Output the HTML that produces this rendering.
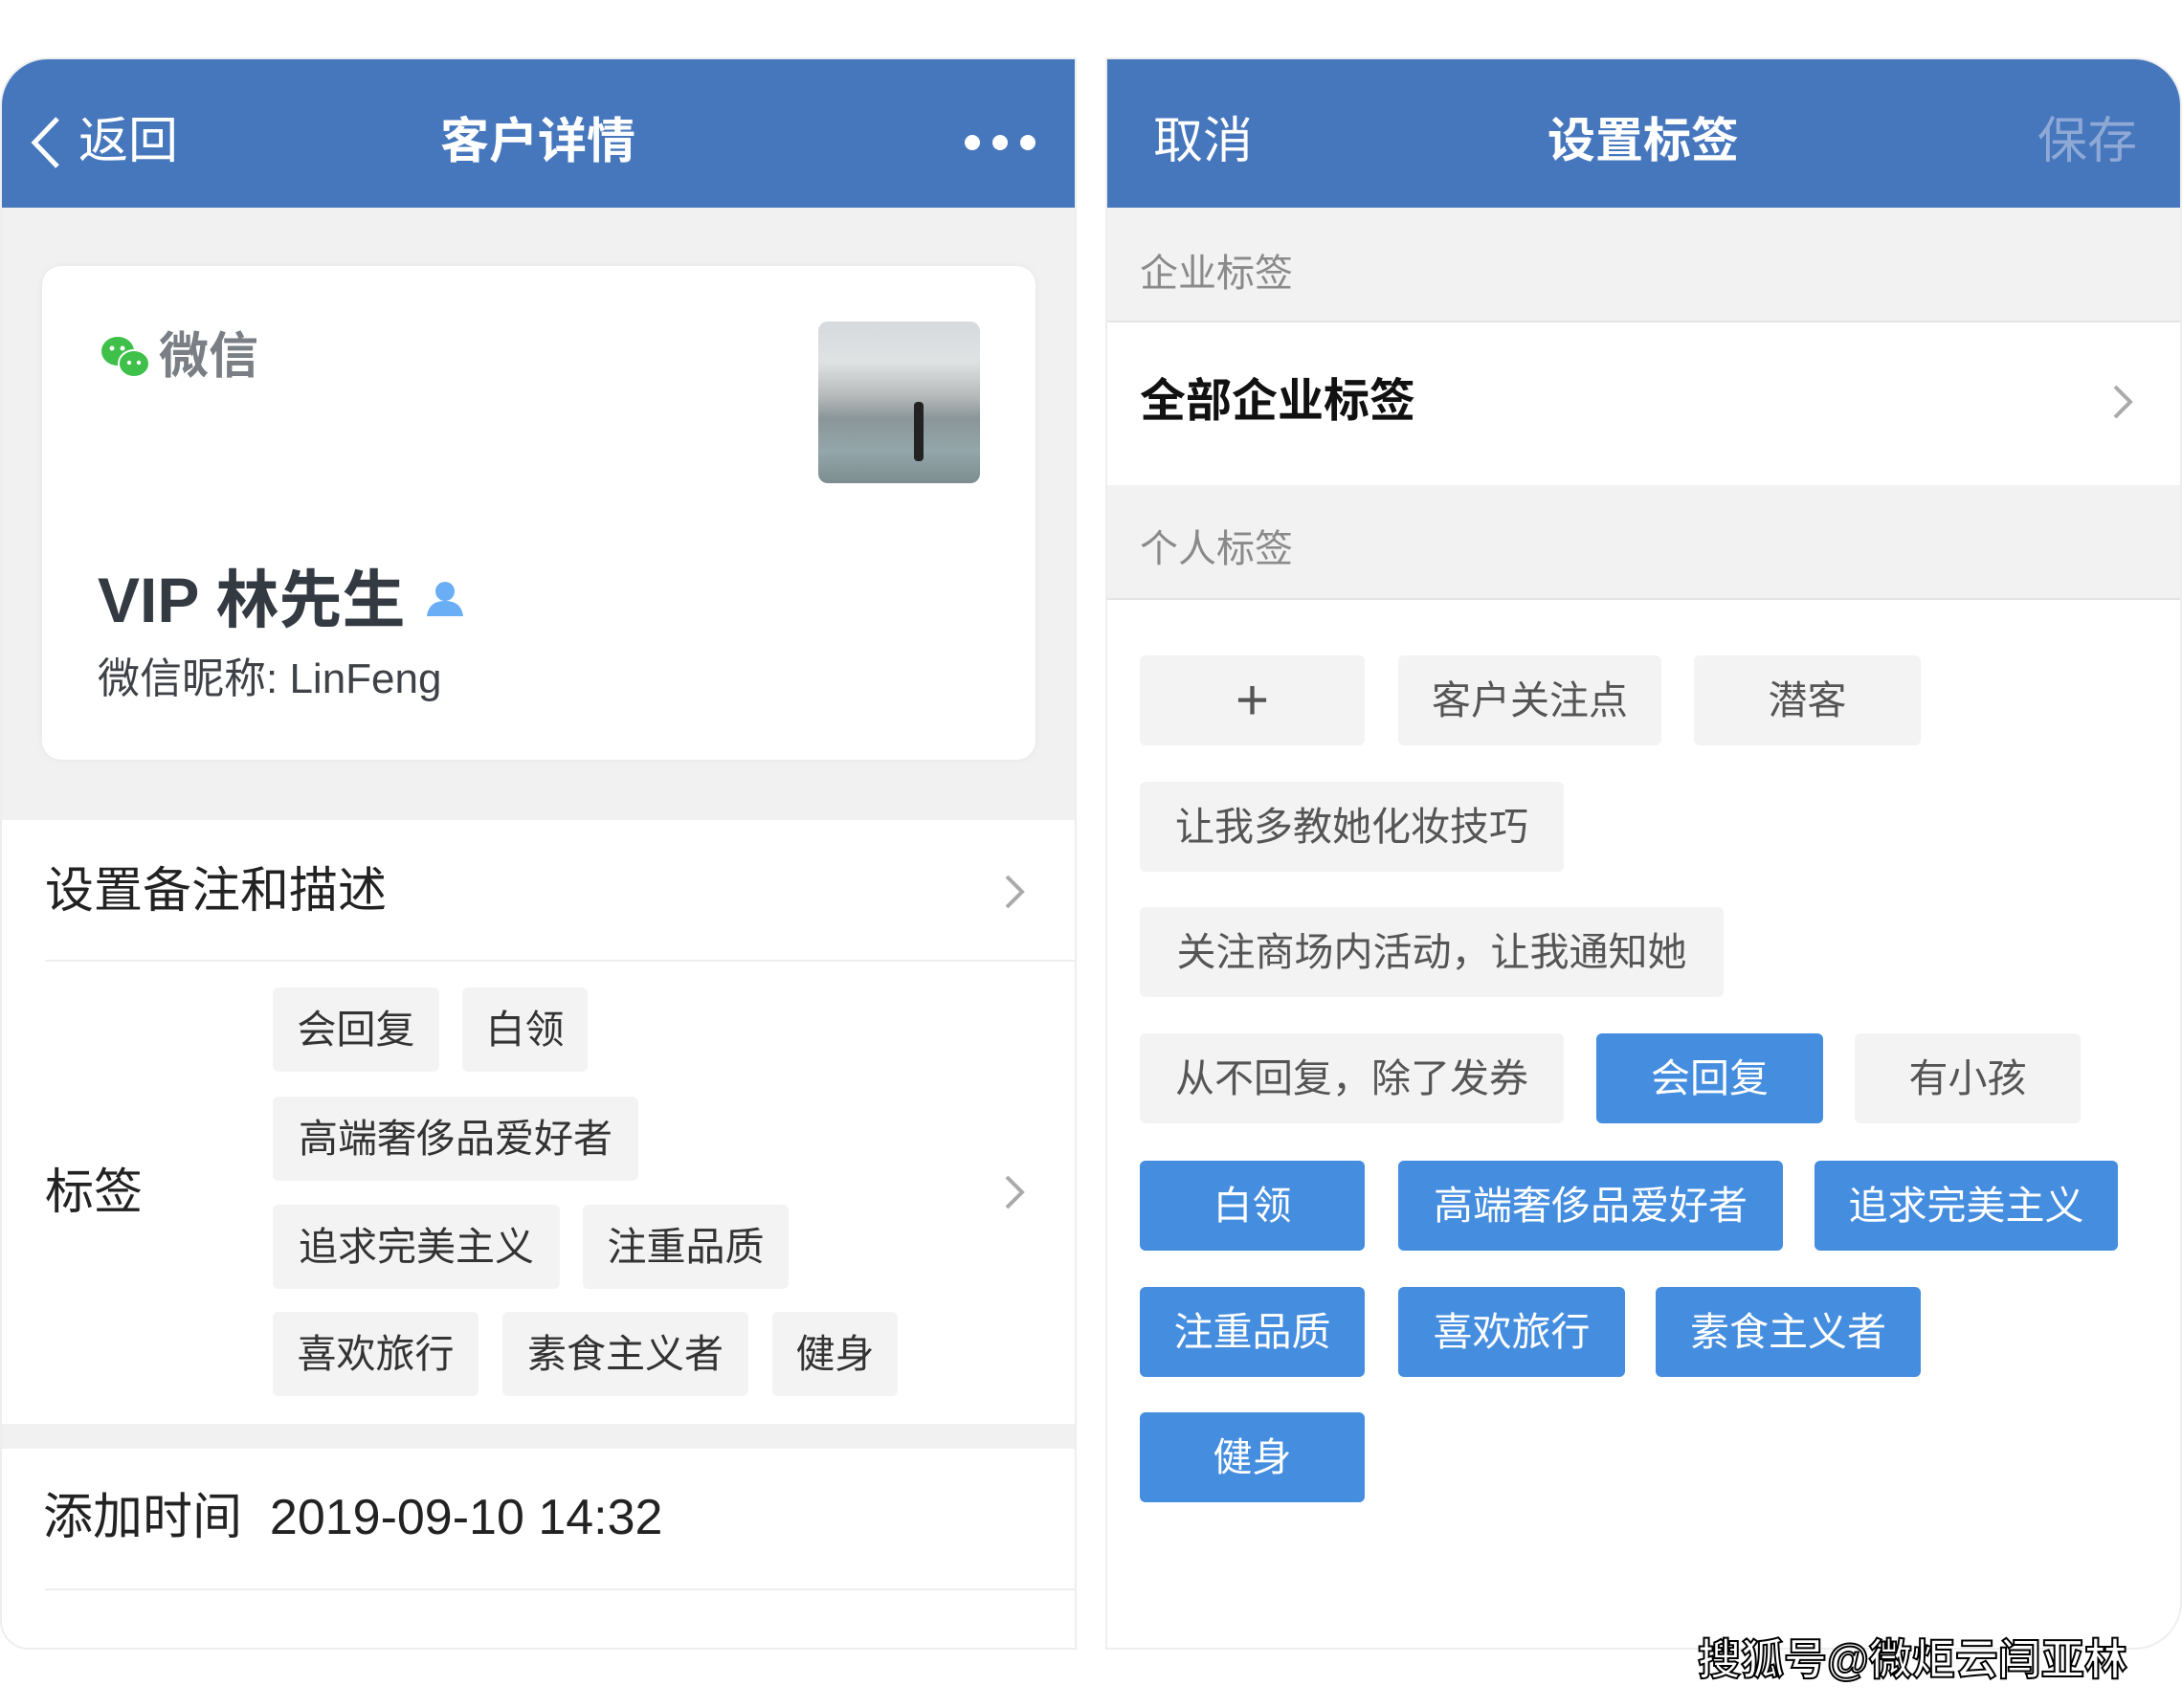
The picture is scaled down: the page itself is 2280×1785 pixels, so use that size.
<!DOCTYPE html>
<html><head><meta charset="utf-8"><style>
*{margin:0;padding:0;box-sizing:border-box}
body{width:2280px;height:1785px;background:#fff;position:relative;overflow:hidden;font-family:"Liberation Sans","Noto Sans CJK SC",sans-serif}
.a{position:absolute}
.t{white-space:nowrap;line-height:1}
.chip{position:absolute;background:#f3f3f3;color:#333;font-size:41px;display:flex;align-items:center;justify-content:center;border-radius:6px;line-height:1}
.b{background:#448ddf;color:#fff!important}
</style></head><body>
<!-- left panel -->
<div class="a" style="left:0;top:60px;width:1125px;height:1664px;background:#fff;border-radius:50px 0 0 30px;border:2px solid #eee;overflow:hidden">
 <div class="a" style="left:0;top:0;width:1125px;height:155px;background:#4677bd"></div>
 <div class="a" style="left:0;top:155px;width:1125px;height:640px;background:#f1f1f1"></div>
 <div class="a" style="left:0;top:1426px;width:1125px;height:26px;background:#f1f1f1"></div>
</div>
<svg class="a" style="left:30px;top:120px" width="36" height="58"><path d="M30 4 L6 29 L30 54" fill="none" stroke="#fff" stroke-width="5"/></svg>
<div class="a t" style="left:82px;top:122px;font-size:52px;color:#fff">返回</div>
<div class="a t" style="left:460px;top:122px;font-size:51px;color:#fff;font-weight:bold">客户详情</div>
<div class="a" style="left:1008px;top:141px;width:16px;height:16px;border-radius:50%;background:#fff"></div>
<div class="a" style="left:1037px;top:141px;width:16px;height:16px;border-radius:50%;background:#fff"></div>
<div class="a" style="left:1066px;top:141px;width:16px;height:16px;border-radius:50%;background:#fff"></div>
<!-- card -->
<div class="a" style="left:44px;top:278px;width:1038px;height:516px;background:#fff;border-radius:20px;box-shadow:0 0 8px rgba(0,0,0,.05)"></div>
<svg class="a" style="left:104px;top:350px" width="54" height="48"><ellipse cx="19" cy="17" rx="17" ry="15" fill="#3fc04a"/><ellipse cx="36" cy="30" rx="16" ry="14" fill="#3fc04a" stroke="#fff" stroke-width="2"/><circle cx="13" cy="14" r="2.5" fill="#fff"/><circle cx="24" cy="14" r="2.5" fill="#fff"/><circle cx="31" cy="29" r="2.2" fill="#fff"/><circle cx="41" cy="29" r="2.2" fill="#fff"/></svg>
<div class="a t" style="left:166px;top:347px;font-size:52px;color:#7a7f85;font-weight:bold">微信</div>
<div class="a" style="left:855px;top:336px;width:169px;height:169px;border-radius:10px;background:linear-gradient(180deg,#d7dadd 0%,#dfe2e3 25%,#b9bcbc 45%,#8a9699 60%,#93a6a9 80%,#7d8d90 100%)"></div>
<div class="a" style="left:955px;top:420px;width:10px;height:62px;background:#222;border-radius:4px"></div>
<div class="a t" style="left:102px;top:594px;font-size:66px;color:#343a42;font-weight:bold">VIP 林先生</div>
<svg class="a" style="left:444px;top:606px" width="42" height="40"><circle cx="21" cy="12" r="10" fill="#6aaef5"/><path d="M2 38 Q4 22 21 22 Q38 22 40 38Z" fill="#6aaef5"/></svg>
<div class="a t" style="left:102px;top:688px;font-size:44px;color:#3e4247">微信昵称: LinFeng</div>
<!-- rows -->
<div class="a t" style="left:47px;top:905px;font-size:51px;color:#222">设置备注和描述</div>
<svg class="a" style="left:1048px;top:912px" width="24" height="40"><path d="M4 4 L20 20 L4 36" fill="none" stroke="#aaa" stroke-width="4"/></svg>
<div class="a" style="left:47px;top:1003px;width:1078px;height:2px;background:#eee"></div>
<div class="a t" style="left:47px;top:1220px;font-size:51px;color:#222">标签</div>
<svg class="a" style="left:1048px;top:1226px" width="24" height="40"><path d="M4 4 L20 20 L4 36" fill="none" stroke="#aaa" stroke-width="4"/></svg>
<div class="chip" style="left:285px;top:1032px;width:174px;height:88px">会回复</div>
<div class="chip" style="left:483px;top:1032px;width:131px;height:88px">白领</div>
<div class="chip" style="left:285px;top:1146px;width:382px;height:88px">高端奢侈品爱好者</div>
<div class="chip" style="left:285px;top:1259px;width:300px;height:88px">追求完美主义</div>
<div class="chip" style="left:609px;top:1259px;width:215px;height:88px">注重品质</div>
<div class="chip" style="left:285px;top:1371px;width:215px;height:88px">喜欢旅行</div>
<div class="chip" style="left:525px;top:1371px;width:257px;height:88px">素食主义者</div>
<div class="chip" style="left:807px;top:1371px;width:131px;height:88px">健身</div>
<div class="a t" style="left:45px;top:1560px;font-size:52px;color:#222">添加时间&nbsp;&nbsp;2019-09-10 14:32</div>
<div class="a" style="left:47px;top:1660px;width:1078px;height:2px;background:#eee"></div>
<!-- right panel -->
<div class="a" style="left:1155px;top:60px;width:1125px;height:1664px;background:#fff;border-radius:0 50px 50px 0;border:2px solid #eee;overflow:hidden">
 <div class="a" style="left:0;top:0;width:1125px;height:155px;background:#4677bd"></div>
 <div class="a" style="left:0;top:155px;width:1125px;height:119px;background:#f2f2f2"></div>
 <div class="a" style="left:0;top:445px;width:1125px;height:119px;background:#f2f2f2"></div>
 <div class="a" style="left:0;top:273px;width:1125px;height:2px;background:#e4e4e4"></div>
 <div class="a" style="left:0;top:563px;width:1125px;height:2px;background:#e4e4e4"></div>
</div>
<div class="a t" style="left:1205px;top:122px;font-size:52px;color:#fff">取消</div>
<div class="a t" style="left:1617px;top:122px;font-size:50px;color:#fff;font-weight:bold">设置标签</div>
<div class="a t" style="left:2129px;top:122px;font-size:52px;color:#8fa9d6">保存</div>
<div class="a t" style="left:1191px;top:266px;font-size:40px;color:#8a8a8a">企业标签</div>
<div class="a t" style="left:1191px;top:396px;font-size:48px;color:#111;font-weight:bold">全部企业标签</div>
<svg class="a" style="left:2206px;top:400px" width="24" height="40"><path d="M4 4 L20 20 L4 36" fill="none" stroke="#aaa" stroke-width="4"/></svg>
<div class="a t" style="left:1191px;top:554px;font-size:40px;color:#8a8a8a">个人标签</div>
<div class="chip" style="left:1191px;top:685px;width:235px;height:94px;font-size:60px;color:#555;font-weight:300">+</div>
<div class="chip" style="left:1461px;top:685px;width:275px;height:94px;color:#555">客户关注点</div>
<div class="chip" style="left:1770px;top:685px;width:237px;height:94px;color:#555">潜客</div>
<div class="chip" style="left:1191px;top:817px;width:443px;height:94px;color:#555">让我多教她化妆技巧</div>
<div class="chip" style="left:1191px;top:948px;width:610px;height:94px;color:#555">关注商场内活动，让我通知她</div>
<div class="chip" style="left:1191px;top:1080px;width:443px;height:94px;color:#555">从不回复，除了发券</div>
<div class="chip b" style="left:1668px;top:1080px;width:237px;height:94px">会回复</div>
<div class="chip" style="left:1938px;top:1080px;width:236px;height:94px;color:#555">有小孩</div>
<div class="chip b" style="left:1191px;top:1213px;width:235px;height:94px">白领</div>
<div class="chip b" style="left:1461px;top:1213px;width:402px;height:94px">高端奢侈品爱好者</div>
<div class="chip b" style="left:1896px;top:1213px;width:317px;height:94px">追求完美主义</div>
<div class="chip b" style="left:1191px;top:1345px;width:235px;height:94px">注重品质</div>
<div class="chip b" style="left:1461px;top:1345px;width:237px;height:94px">喜欢旅行</div>
<div class="chip b" style="left:1730px;top:1345px;width:277px;height:94px">素食主义者</div>
<div class="chip b" style="left:1191px;top:1476px;width:235px;height:94px">健身</div>
<div class="a t" style="left:1774px;top:1712px;font-size:45px;color:#fff;-webkit-text-stroke:2px #000;font-weight:bold">搜狐号@微炬云闫亚林</div>
</body></html>
